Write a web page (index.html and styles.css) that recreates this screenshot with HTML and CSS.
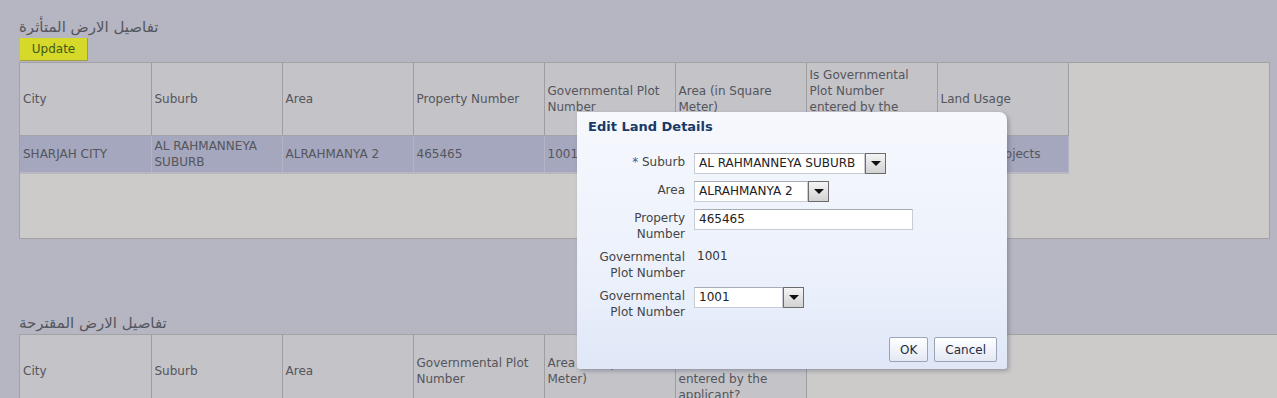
FILE: index.html
```html
<!DOCTYPE html>
<html lang="en">
<head>
    <meta charset="UTF-8">
    <title>Land Details</title>
    <link rel="stylesheet" href="styles.css">
</head>
<body>
    <div class="section">
        <div class="section-title" dir="rtl">تفاصيل الارض المتأثرة</div>
        <button class="update-btn">Update</button>
        <div class="grid-box first">
            <table class="grid">
                <tr class="head">
                    <th>City</th>
                    <th>Suburb</th>
                    <th>Area</th>
                    <th>Property Number</th>
                    <th>Governmental Plot Number</th>
                    <th>Area (in Square Meter)</th>
                    <th>Is Governmental Plot Number entered by the applicant?</th>
                    <th>Land Usage</th>
                </tr>
                <tr class="selected">
                    <td>SHARJAH CITY</td>
                    <td>AL RAHMANNEYA SUBURB</td>
                    <td>ALRAHMANYA 2</td>
                    <td>465465</td>
                    <td>1001</td>
                    <td>1000</td>
                    <td>No</td>
                    <td>Housing Projects</td>
                </tr>
            </table>
        </div>
    </div>

    <div class="section second">
        <div class="section-title" dir="rtl">تفاصيل الارض المقترحة</div>
        <div class="grid-box">
            <table class="grid">
                <tr class="head">
                    <th>City</th>
                    <th>Suburb</th>
                    <th>Area</th>
                    <th>Governmental Plot Number</th>
                    <th>Area (in Square Meter)</th>
                    <th>Is Governmental Plot Number entered by the applicant?</th>
                </tr>
            </table>
        </div>
    </div>

    <div class="dialog">
        <div class="dialog-title">Edit Land Details</div>
        <div class="form">
            <div class="label"><span class="req">*</span> Suburb</div>
            <div class="field"><span class="select w-suburb">AL RAHMANNEYA SUBURB</span><span class="drop"></span></div>

            <div class="label">Area</div>
            <div class="field"><span class="select w-area">ALRAHMANYA 2</span><span class="drop"></span></div>

            <div class="label">Property Number</div>
            <div class="field"><span class="input">465465</span></div>

            <div class="label">Governmental Plot Number</div>
            <div class="field"><span class="value">1001</span></div>

            <div class="label">Governmental Plot Number</div>
            <div class="field"><span class="select w-plot">1001</span><span class="drop"></span></div>
        </div>
        <div class="actions">
            <button class="btn">OK</button>
            <button class="btn">Cancel</button>
        </div>
    </div>
</body>
</html>
```

FILE: styles.css
```css
* { margin: 0; padding: 0; box-sizing: border-box; }
body {
    font-family: "DejaVu Sans", Tahoma, sans-serif;
    font-size: 12px;
    background: #b6b6c2;
    color: #55555c;
    width: 1277px;
    height: 398px;
    overflow: hidden;
    position: relative;
}
.section {
    padding-left: 19px;
    padding-top: 18px;
}
.section.second {
    padding-top: 75px;
}
.section-title {
    white-space: nowrap;
    font-size: 15px;
    line-height: 19px;
    color: #55555e;
    text-align: left;
    font-family: "DejaVu Sans", sans-serif;
}
.update-btn {
    display: block;
    margin-top: 1px;
    margin-left: 1px;
    width: 68px;
    height: 23px;
    font-family: inherit;
    font-size: 12px;
    color: #3d5a1a;
    background: #d6d82a;
    border: none;
    border-right: 1px solid #a0a040;
    border-bottom: 1px solid #a0a040;
}
.grid-box {
    width: 1251px;
    background: #cccbc9;
    border: 1px solid #a2a2a6;
    margin-top: 1px;
}
.grid-box.first {
    height: 177px;
}
.grid-box:not(.first) {
    width: 1258px;
    height: 70px;
    border-right: none;
    border-bottom: none;
}
.grid {
    border-collapse: collapse;
    table-layout: fixed;
}
.grid th, .grid td {
    width: 131px;
    text-align: left;
    font-weight: normal;
    vertical-align: middle;
    padding: 0 3px;
    line-height: 16px;
    border-right: 1px solid #9d9da2;
}
.grid .head th {
    height: 72px;
    background: #c3c3c8;
    border-bottom: 1px solid #a3a3a8;
}
.grid .selected td {
    height: 38px;
    background: #a4a7bd;
    border-right-color: #b3b5c6;
    border-bottom: 2px solid #b8b8c0;
}

.dialog {
    position: absolute;
    left: 577px;
    top: 112px;
    width: 430px;
    height: 257px;
    background: linear-gradient(180deg, #f6f8fd 0%, #eaf0fb 70%, #dfe6f6 100%);
    border-radius: 0 8px 3px 3px;
    box-shadow: 2px 2px 4px rgba(90, 90, 110, 0.45);
    color: #3a3a3a;
}
.dialog-title {
    padding: 7px 0 0 11px;
    font-weight: bold;
    font-size: 13px;
    color: #173a68;
    height: 41px;
}
.form {
    display: grid;
    grid-template-columns: 108px 1fr;
    column-gap: 9px;
    row-gap: 6px;
    align-items: start;
}
.label {
    text-align: right;
    font-size: 12px;
    line-height: 16px;
    color: #454545;
    padding-left: 16px;
    padding-top: 1px;
}
.req {
    color: #3860a8;
}
.field {
    display: flex;
    align-items: flex-start;
    min-height: 22px;
}
.select, .input {
    height: 21px;
    line-height: 19px;
    padding-left: 4px;
    background: #fff;
    border: 1px solid #c8ccd4;
    border-top-color: #a8acb4;
    color: #222;
}
.w-suburb { width: 171px; }
.w-area { width: 114px; }
.w-plot { width: 89px; }
.input { width: 219px; }
.value {
    padding-left: 3px;
    line-height: 17px;
    color: #333;
}
.drop {
    width: 21px;
    height: 21px;
    border: 1px solid #6c6c6c;
    background: linear-gradient(180deg, #f4f4f4, #d2d2d2);
    position: relative;
}
.drop::after {
    content: "";
    position: absolute;
    left: 5px;
    top: 7px;
    border-left: 5px solid transparent;
    border-right: 5px solid transparent;
    border-top: 5px solid #111;
}
.actions {
    display: flex;
    justify-content: flex-end;
    gap: 6px;
    padding: 17px 10px 0 0;
}
.btn {
    font-family: inherit;
    font-size: 12px;
    height: 25px;
    padding: 0 10px;
    color: #1c2c44;
    background: linear-gradient(180deg, #ffffff, #e3e8f3);
    border: 1px solid #9aa4b8;
    border-radius: 2px;
}
```
